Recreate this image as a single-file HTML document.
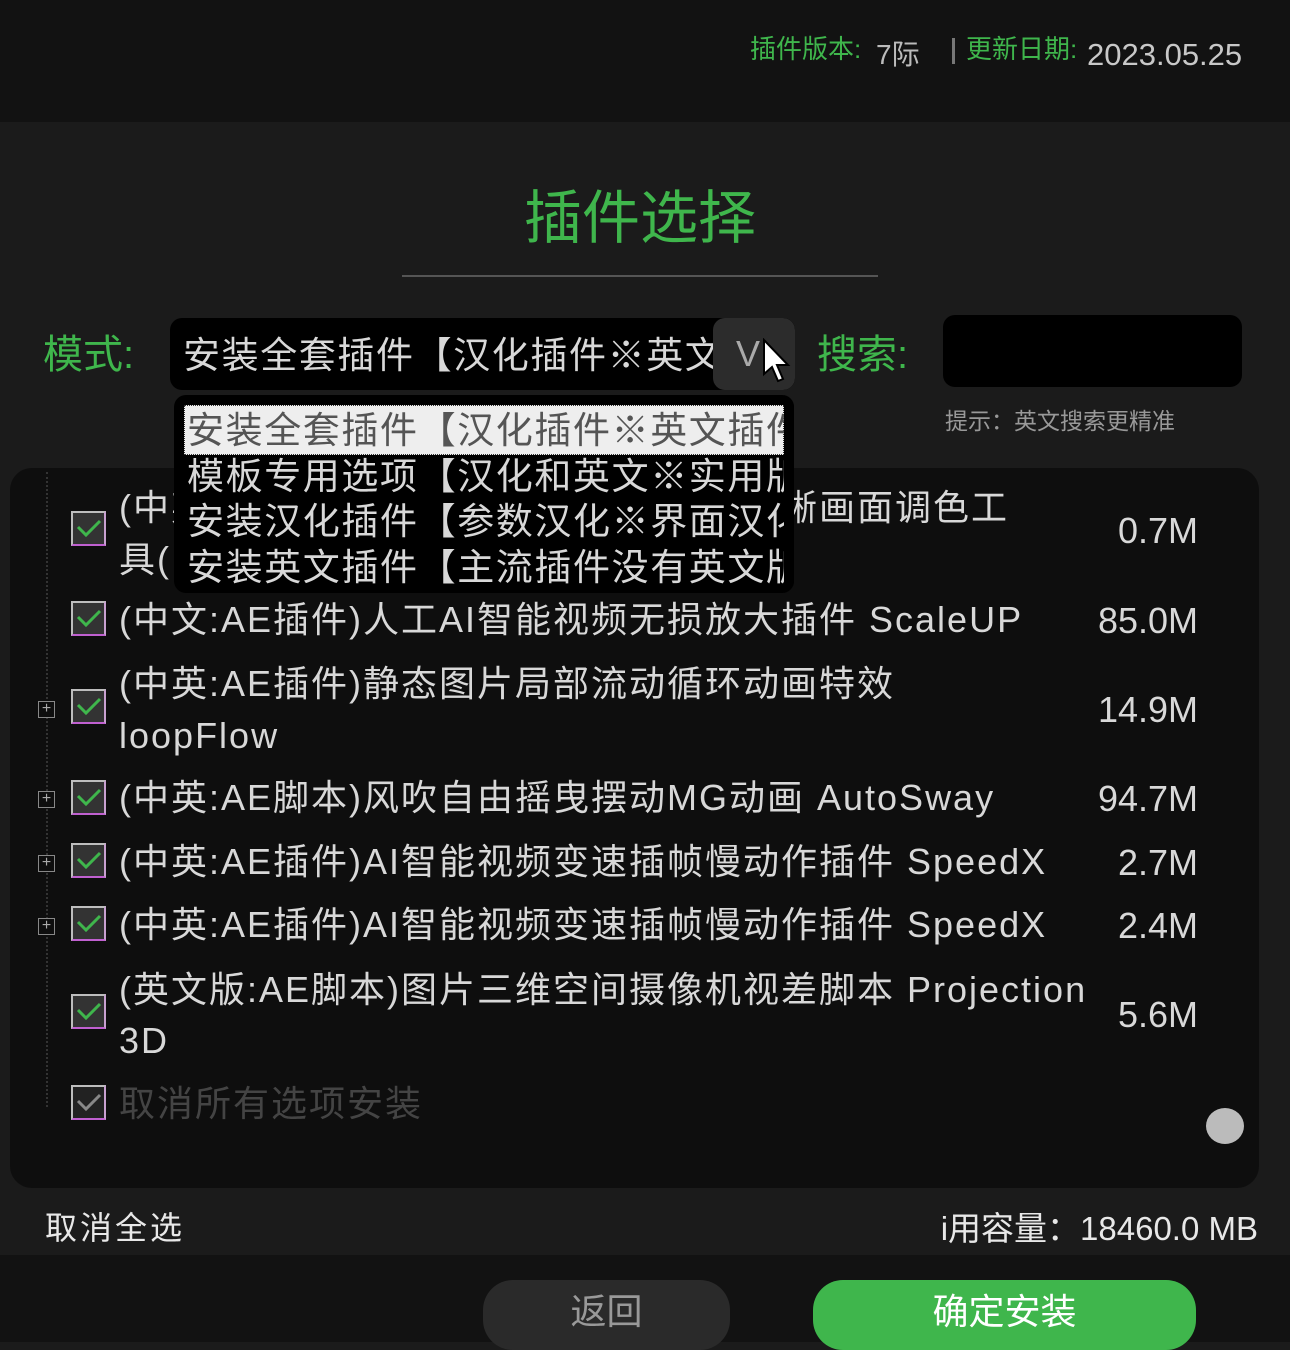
<!DOCTYPE html>
<html><head><meta charset="utf-8">
<style>
*{margin:0;padding:0;box-sizing:border-box}
body{width:1290px;height:1342px;overflow:hidden;background:#1b1b1b;font-family:"Liberation Sans","Noto Sans CJK SC",sans-serif;position:relative}
.a{position:absolute;white-space:nowrap;line-height:1}
.g{color:#3fb64c}
.w{color:#d8d8d8}
.cb{position:absolute;left:71px;width:35px;height:35px;border:2px solid #bdbdbd;border-bottom-color:#c060d0;border-right-color:#c8a0d0;background:#333}
.cb svg{position:absolute;left:3px;top:4px}
.t{position:absolute;left:119px;color:#d8d8d8;font-size:36px;line-height:52px;white-space:nowrap;letter-spacing:2px}
.s{position:absolute;right:92px;color:#d8d8d8;font-size:36px;line-height:1;white-space:nowrap}
.pl{position:absolute;left:38px;width:17px;height:17px;border:1px solid #888;color:#aaa;font-size:16px;line-height:14px;text-align:center;background:#0e0e0e}
.dd{font-size:37px;color:#d8d8d8;letter-spacing:1.6px}
</style></head><body>
<div class="a" style="left:0;top:0;width:1290px;height:122px;background:#121212"></div>
<div class="a" style="left:0;top:1255px;width:1290px;height:87px;background:#121212"></div>

<div class="a g" style="left:750px;top:36px;font-size:26px">插件版本:</div>
<div class="a w" style="left:876px;top:41px;font-size:28px;color:#bbb">7际</div>
<div class="a" style="left:952px;top:38px;width:3px;height:26px;background:#777"></div>
<div class="a g" style="left:966px;top:36px;font-size:26px">更新日期:</div>
<div class="a" style="left:1087px;top:39px;font-size:31px;color:#c8c8c8">2023.05.25</div>

<div class="a g" style="left:0;width:1280px;text-align:center;top:190px;font-size:58px">插件选择</div>
<div class="a" style="left:402px;top:275px;width:476px;height:2px;background:#555"></div>

<div class="a g" style="left:43px;top:335px;font-size:40px">模式:</div>
<div class="a" style="left:170px;top:318px;width:625px;height:72px;background:#000;border-radius:12px;overflow:hidden">
  <div class="a dd" style="left:13px;top:19px">安装全套插件【汉化插件※英文</div>
  <div class="a" style="left:543px;top:0;width:82px;height:72px;background:#2c2c2c;border-radius:12px"></div>
  <div class="a" style="left:566px;top:18px;font-size:36px;color:#aaa">V</div>
</div>
<svg class="a" style="left:762px;top:338px" width="30" height="46" viewBox="0 0 30 46"><path d="M2 2 L2 36 L10 29 L16 43 L21 41 L15 27 L26 27 Z" fill="#fff" stroke="#000" stroke-width="2"/></svg>
<div class="a g" style="left:817px;top:335px;font-size:40px">搜索:</div>
<div class="a" style="left:943px;top:315px;width:299px;height:72px;background:#000;border-radius:12px"></div>
<div class="a" style="left:945px;top:410px;font-size:23px;color:#999">提示：英文搜索更精准</div>

<div class="a" style="left:10px;top:468px;width:1249px;height:720px;background:#0e0e0e;border-radius:22px"></div>
<div class="a" style="left:46px;top:472px;width:0;height:635px;border-left:2px dotted #333"></div>

<div class="cb" style="top:511px"><svg width="26" height="22"><path d="M2 10 L10 18 L24 4" stroke="#3fb64c" stroke-width="3" fill="none"/></svg></div>
<div class="t" style="top:482px">(中英:AE插件)人工AI智能视频高清化清晰画面调色工</div>
<div class="t" style="top:534px">具(</div>
<div class="s" style="top:513px">0.7M</div>

<div class="cb" style="top:601px"><svg width="26" height="22"><path d="M2 10 L10 18 L24 4" stroke="#3fb64c" stroke-width="3" fill="none"/></svg></div>
<div class="t" style="top:594px">(中文:AE插件)人工AI智能视频无损放大插件 ScaleUP</div>
<div class="s" style="top:603px">85.0M</div>

<div class="pl" style="top:701px">+</div>
<div class="cb" style="top:689px"><svg width="26" height="22"><path d="M2 10 L10 18 L24 4" stroke="#3fb64c" stroke-width="3" fill="none"/></svg></div>
<div class="t" style="top:658px">(中英:AE插件)静态图片局部流动循环动画特效</div>
<div class="t" style="top:710px">loopFlow</div>
<div class="s" style="top:692px">14.9M</div>

<div class="pl" style="top:791px">+</div>
<div class="cb" style="top:780px"><svg width="26" height="22"><path d="M2 10 L10 18 L24 4" stroke="#3fb64c" stroke-width="3" fill="none"/></svg></div>
<div class="t" style="top:772px">(中英:AE脚本)风吹自由摇曳摆动MG动画 AutoSway</div>
<div class="s" style="top:781px">94.7M</div>

<div class="pl" style="top:855px">+</div>
<div class="cb" style="top:843px"><svg width="26" height="22"><path d="M2 10 L10 18 L24 4" stroke="#3fb64c" stroke-width="3" fill="none"/></svg></div>
<div class="t" style="top:836px">(中英:AE插件)AI智能视频变速插帧慢动作插件 SpeedX</div>
<div class="s" style="top:845px">2.7M</div>

<div class="pl" style="top:918px">+</div>
<div class="cb" style="top:906px"><svg width="26" height="22"><path d="M2 10 L10 18 L24 4" stroke="#3fb64c" stroke-width="3" fill="none"/></svg></div>
<div class="t" style="top:899px">(中英:AE插件)AI智能视频变速插帧慢动作插件 SpeedX</div>
<div class="s" style="top:908px">2.4M</div>

<div class="cb" style="top:994px"><svg width="26" height="22"><path d="M2 10 L10 18 L24 4" stroke="#3fb64c" stroke-width="3" fill="none"/></svg></div>
<div class="t" style="top:964px">(英文版:AE脚本)图片三维空间摄像机视差脚本 Projection</div>
<div class="t" style="top:1015px">3D</div>
<div class="s" style="top:997px">5.6M</div>

<div class="cb" style="top:1085px;background:#222"><svg width="26" height="22"><path d="M2 10 L10 18 L24 4" stroke="#888" stroke-width="3" fill="none"/></svg></div>
<div class="t" style="top:1078px;color:#444">取消所有选项安装</div>
<div class="a" style="left:1206px;top:1108px;width:38px;height:36px;border-radius:50%;background:#bbb"></div>

<div class="a" style="left:174px;top:395px;width:620px;height:198px;background:#000;border-radius:12px;overflow:hidden">
  <div class="a" style="left:10px;top:10px;width:600px;height:50px;background:#eee;border:1px dotted #333"></div>
  <div class="a dd" style="left:13px;top:17px;color:#555">安装全套插件【汉化插件※英文插件</div>
  <div class="a dd" style="left:13px;top:63px">模板专用选项【汉化和英文※实用版</div>
  <div class="a dd" style="left:13px;top:108px">安装汉化插件【参数汉化※界面汉化</div>
  <div class="a dd" style="left:13px;top:154px">安装英文插件【主流插件没有英文版</div>
  <div class="a" style="left:610px;top:0;width:10px;height:198px;background:#000"></div>
</div>

<div class="a" style="left:45px;top:1212px;font-size:32px;color:#e8e8e8;letter-spacing:3px">取消全选</div>
<div class="a" style="right:32px;top:1212px;font-size:33px;color:#e8e8e8">i用容量：18460.0 MB</div>

<div class="a" style="left:483px;top:1280px;width:247px;height:70px;background:#2a2a2a;border-radius:30px"></div>
<div class="a" style="left:483px;top:1294px;width:247px;text-align:center;font-size:36px;color:#999">返回</div>
<div class="a" style="left:813px;top:1280px;width:383px;height:70px;background:#3fb64c;border-radius:30px"></div>
<div class="a" style="left:813px;top:1294px;width:383px;text-align:center;font-size:36px;color:#fff">确定安装</div>
</body></html>
